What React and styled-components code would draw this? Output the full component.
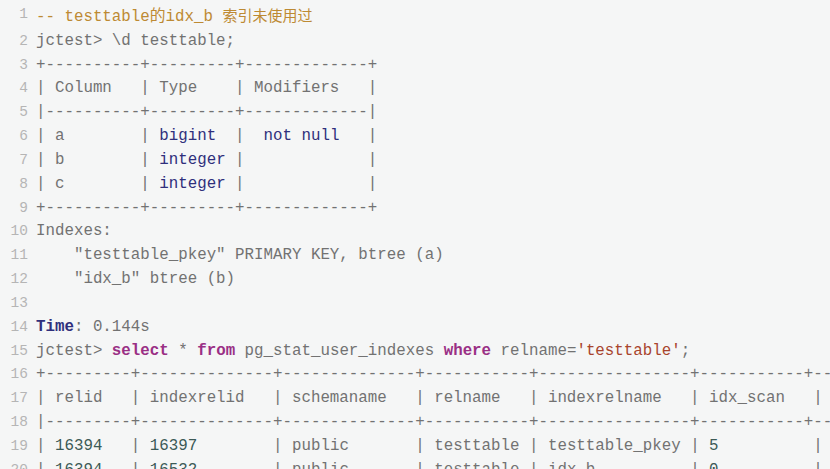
import styled, { createGlobalStyle } from 'styled-components'

const GlobalStyle = createGlobalStyle`
  html, body {
    margin: 0;
    padding: 0;
    background: #f5f6f6;
  }
`

const Block = styled.div`
  width: 830px;
  height: 469px;
  overflow: hidden;
  background: #f5f6f6;
  padding-top: 3px;
  box-sizing: border-box;

  font-family: 'Courier New', Courier, 'Nimbus Mono PS', FreeMono, 'Liberation Mono', 'Noto Sans CJK SC', monospace;
  font-size: 15.8px;
  line-height: 23.83px;
  color: #727272;
`

const Line = styled.div`
  display: grid;
  grid-template-columns: 28px 1fr;
  column-gap: 8px;
  white-space: pre;
`

const Gutter = styled.span`
  text-align: right;
  color: #b5b5b5;
  font-size: 14.5px;
`

const colors = {
  comment: '#bd8a33',
  keyword: '#9a2f85',
  type: '#2f2f7c',
  string: '#a8442d',
  number: '#3c5a56',
  label: '#2f2f7c',
}

const Tok = styled.span`
  color: ${(p) => colors[p.$kind] || 'inherit'};
  font-weight: ${(p) => (p.$kind === 'keyword' || p.$kind === 'label' ? 700 : 400)};
`

const Cjk = styled.span`
  font-family: 'Noto Sans CJK SC', sans-serif;
  font-size: 15px;
`

const lines = [
  [
    ['comment', '-- testtable的idx_b '],
    ['comment-cjk', '索引未使用过'],
  ],
  [[null, 'jctest> \\d testtable;']],
  [[null, '+----------+---------+-------------+']],
  [[null, '| Column   | Type    | Modifiers   |']],
  [[null, '|----------+---------+-------------|']],
  [
    [null, '| a        | '],
    ['type', 'bigint'],
    [null, '  |  '],
    ['type', 'not null'],
    [null, '   |'],
  ],
  [
    [null, '| b        | '],
    ['type', 'integer'],
    [null, ' |             |'],
  ],
  [
    [null, '| c        | '],
    ['type', 'integer'],
    [null, ' |             |'],
  ],
  [[null, '+----------+---------+-------------+']],
  [[null, 'Indexes:']],
  [[null, '    "testtable_pkey" PRIMARY KEY, btree (a)']],
  [[null, '    "idx_b" btree (b)']],
  [[null, '']],
  [
    ['label', 'Time'],
    [null, ': 0.144s'],
  ],
  [
    [null, 'jctest> '],
    ['keyword', 'select'],
    [null, ' * '],
    ['keyword', 'from'],
    [null, ' pg_stat_user_indexes '],
    ['keyword', 'where'],
    [null, ' relname='],
    ['string', "'testtable'"],
    [null, ';'],
  ],
  [[null, '+---------+--------------+--------------+-----------+----------------+-----------+---------------+']],
  [[null, '| relid   | indexrelid   | schemaname   | relname   | indexrelname   | idx_scan   | idx_tup_read  |']],
  [[null, '|---------+--------------+--------------+-----------+----------------+-----------+---------------|']],
  [
    [null, '| '],
    ['number', '16394'],
    [null, '   | '],
    ['number', '16397'],
    [null, '        | public       | testtable | testtable_pkey | '],
    ['number', '5'],
    [null, '          | '],
    ['number', '5'],
  ],
  [
    [null, '| '],
    ['number', '16394'],
    [null, '   | '],
    ['number', '16532'],
    [null, '        | public       | testtable | idx_b          | '],
    ['number', '0'],
    [null, '          | '],
    ['number', '0'],
  ],
]

const App = () => (
  <>
    <GlobalStyle />
    <Block>
      {lines.map((parts, i) => (
        <Line key={i}>
          <Gutter>{i + 1}</Gutter>
          <span>
            {parts.map(([kind, text], j) =>
              kind === 'comment-cjk' ? (
                <Tok key={j} $kind="comment">
                  <Cjk>{text}</Cjk>
                </Tok>
              ) : (
                <Tok key={j} $kind={kind}>
                  {text}
                </Tok>
              )
            )}
          </span>
        </Line>
      ))}
    </Block>
  </>
)

export default App
